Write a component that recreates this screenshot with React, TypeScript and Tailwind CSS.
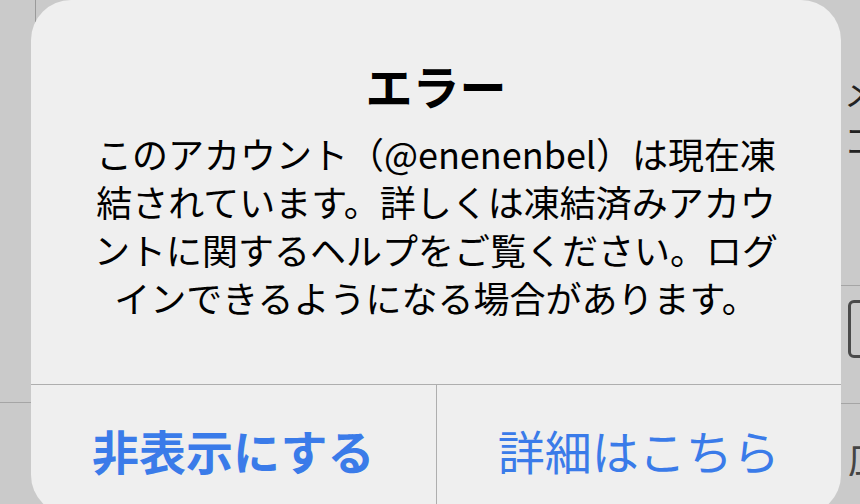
export default function App() {
  return (
    <div className="relative flex h-[504px] w-[860px] items-start overflow-hidden bg-[#cacaca] font-['Noto_Sans_CJK_JP','Noto_Sans',sans-serif]">
      {/* list behind the alert, left side */}
      <div className="flex w-[31px] shrink-0 flex-col">
        <div className="h-[403px] border-b border-[#a5a5a5]" />
      </div>
      <div className="absolute left-[35px] top-0 h-[22px] w-px bg-[#9a9a9a]" />

      {/* alert */}
      <div className="relative z-10 flex h-[515px] w-[810px] shrink-0 flex-col rounded-[40px] bg-[#efefef]">
        <div className="flex h-[384px] flex-col items-center pt-[57px]">
          <h1 className="text-[47px] font-bold leading-[56px] text-black">エラー</h1>
          <p className="mt-[16px] text-center text-[36px] leading-[48px] text-black">
            このアカウント（@enenenbel）は現在凍
            <br />
            結されています。詳しくは凍結済みアカウ
            <br />
            ントに関するヘルプをご覧ください。ログ
            <br />
            インできるようになる場合があります。
          </p>
        </div>
        <div className="h-px bg-[#aeaeae]" />
        <div className="flex h-[130px]">
          <button className="flex flex-1 items-center justify-center text-[47px] font-bold text-[#3a7be9]">
            非表示にする
          </button>
          <div className="w-px bg-[#aeaeae]" />
          <button className="flex flex-1 items-center justify-center text-[47px] text-[#3a7be9]">
            詳細はこちら
          </button>
        </div>
      </div>

      {/* list behind the alert, right side */}
      <div className="flex flex-1 flex-col overflow-hidden">
        <div className="flex h-[286px] flex-col border-b border-[#a5a5a5] pl-[3px] text-[34px] leading-none text-[#222]">
          <span className="mt-[75px] whitespace-nowrap">メ</span>
          <span className="mt-[14px] whitespace-nowrap">コ</span>
        </div>
        <div className="flex h-[118px] flex-col border-b border-[#a5a5a5] pl-[7px]">
          <div className="mt-[14px] h-[58px] w-[40px] shrink-0 rounded-[6px] border-[3px] border-[#4a4a4a]" />
        </div>
        <div className="pl-[7px] pt-[34px] text-[38px] leading-none text-[#444]">
          <span className="whitespace-nowrap">広</span>
        </div>
      </div>
    </div>
  );
}
